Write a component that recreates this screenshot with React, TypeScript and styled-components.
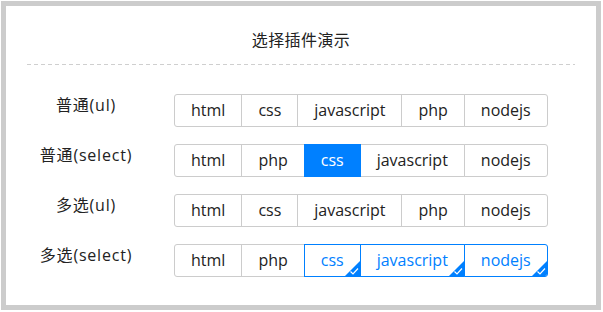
import React from "react";
import styled, { createGlobalStyle, css } from "styled-components";

const Global = createGlobalStyle`
  html, body { margin: 0; padding: 0; background: #fff; }
  body { font-family: "Open Sans", "Noto Sans CJK SC", sans-serif; color: #222; }
`;

const Frame = styled.div`
  margin: 1px 0 0 1px;
  width: 600px;
  height: 309px;
  box-sizing: border-box;
  border: 5px solid #cccccc;
  background: #fff;
  display: flex;
  flex-direction: column;
`;

const Title = styled.h1`
  margin: 0;
  padding-top: 24px;
  font-size: 16px;
  font-weight: normal;
  line-height: 20px;
  letter-spacing: 0.4px;
  text-align: center;
  color: #222;
`;

const Divider = styled.hr`
  margin: 14px 21px 0 21px;
  border: none;
  height: 1px;
  background-image: linear-gradient(to right, #cfcfcf 0 4px, transparent 4px 7px);
  background-size: 7px 1px;
  background-repeat: repeat-x;
`;

const Rows = styled.div`
  display: flex;
  flex-direction: column;
  gap: 17px;
  padding-top: 29px;
`;

const Row = styled.div`
  display: flex;
  align-items: flex-start;
`;

const Label = styled.div`
  width: 160px;
  text-align: center;
  font-size: 16px;
  line-height: 22px;
  letter-spacing: 0.8px;
  color: #222;
`;

const Group = styled.ul`
  list-style: none;
  margin: 0 0 0 8px;
  padding: 0;
  display: flex;
`;

const Item = styled.li<{ $mode: "none" | "solid" | "check" }>`
  position: relative;
  height: 33px;
  box-sizing: border-box;
  padding: 0 16px;
  border: 1px solid #cccccc;
  margin-left: -1px;
  font-size: 16px;
  line-height: 31px;
  color: #222;
  background: #fff;
  overflow: hidden;
  &:first-child {
    margin-left: 0;
    border-radius: 3px 0 0 3px;
  }
  &:last-child {
    border-radius: 0 3px 3px 0;
  }
  ${(p) =>
    p.$mode === "solid" &&
    css`
      background: #0080ff;
      border-color: #0080ff;
      color: #fff;
      z-index: 1;
    `}
  ${(p) =>
    p.$mode === "check" &&
    css`
      border-color: #0080ff;
      color: #0080ff;
      z-index: 1;
    `}
`;

const Corner = styled.svg`
  position: absolute;
  right: 0;
  bottom: 0;
  width: 15px;
  height: 15px;
  display: block;
`;

const Check = () => (
  <Corner viewBox="0 0 15 15">
    <polygon points="15,0 15,15 0,15" fill="#0080ff" />
    <polyline points="5.5,10.5 8,13 13,7.5" fill="none" stroke="#fff" strokeWidth="1.2" />
  </Corner>
);

type Opt = { text: string; mode?: "none" | "solid" | "check" };

const rows: { label: string; items: Opt[] }[] = [
  {
    label: "普通(ul)",
    items: [{ text: "html" }, { text: "css" }, { text: "javascript" }, { text: "php" }, { text: "nodejs" }],
  },
  {
    label: "普通(select)",
    items: [{ text: "html" }, { text: "php" }, { text: "css", mode: "solid" }, { text: "javascript" }, { text: "nodejs" }],
  },
  {
    label: "多选(ul)",
    items: [{ text: "html" }, { text: "css" }, { text: "javascript" }, { text: "php" }, { text: "nodejs" }],
  },
  {
    label: "多选(select)",
    items: [
      { text: "html" },
      { text: "php" },
      { text: "css", mode: "check" },
      { text: "javascript", mode: "check" },
      { text: "nodejs", mode: "check" },
    ],
  },
];

export default function App() {
  return (
    <>
      <Global />
      <Frame>
        <Title>选择插件演示</Title>
        <Divider />
        <Rows>
          {rows.map((r) => (
            <Row key={r.label}>
              <Label>{r.label}</Label>
              <Group>
                {r.items.map((it) => (
                  <Item key={it.text} $mode={it.mode ?? "none"}>
                    {it.text}
                    {it.mode === "check" && <Check />}
                  </Item>
                ))}
              </Group>
            </Row>
          ))}
        </Rows>
      </Frame>
    </>
  );
}
